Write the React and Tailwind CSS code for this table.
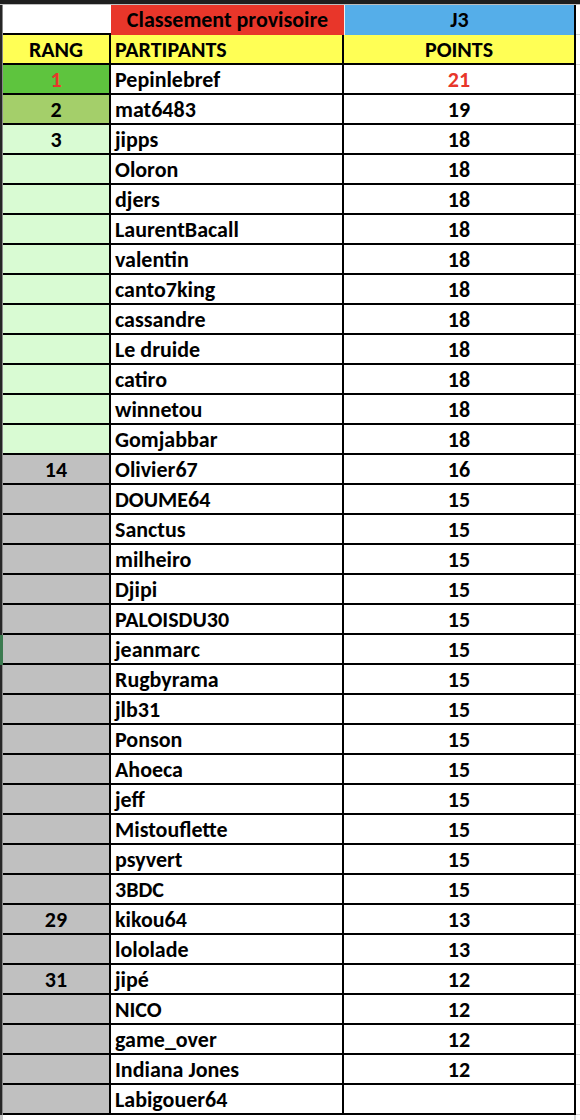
const rows = [
  ["1", "Pepinlebref", "21"],
  ["2", "mat6483", "19"],
  ["3", "jipps", "18"],
  ["", "Oloron", "18"],
  ["", "djers", "18"],
  ["", "LaurentBacall", "18"],
  ["", "valentin", "18"],
  ["", "canto7king", "18"],
  ["", "cassandre", "18"],
  ["", "Le druide", "18"],
  ["", "catiro", "18"],
  ["", "winnetou", "18"],
  ["", "Gomjabbar", "18"],
  ["14", "Olivier67", "16"],
  ["", "DOUME64", "15"],
  ["", "Sanctus", "15"],
  ["", "milheiro", "15"],
  ["", "Djipi", "15"],
  ["", "PALOISDU30", "15"],
  ["", "jeanmarc", "15"],
  ["", "Rugbyrama", "15"],
  ["", "jlb31", "15"],
  ["", "Ponson", "15"],
  ["", "Ahoeca", "15"],
  ["", "jeff", "15"],
  ["", "Mistouflette", "15"],
  ["", "psyvert", "15"],
  ["", "3BDC", "15"],
  ["29", "kikou64", "13"],
  ["", "lololade", "13"],
  ["31", "jipé", "12"],
  ["", "NICO", "12"],
  ["", "game_over", "12"],
  ["", "Indiana Jones", "12"],
  ["", "Labigouer64", ""],
];

function rankColor(i) {
  if (i === 0) return "bg-[#5ec43e]";
  if (i === 1) return "bg-[#a4cf6a]";
  if (i < 13) return "bg-[#d9fbd3]";
  return "bg-[#c0c0c0]";
}

function Strip({ selected }) {
  return (
    <div className={`flex w-[3px] shrink-0 ${selected ? "bg-[#3b7a4f]" : "bg-[#262626]"}`}>
      <div className="w-[2px]" />
      <div className={`w-px ${selected ? "bg-[#3b7a4f]" : "bg-[#8a8a8a]"}`} />
    </div>
  );
}

function Edge() {
  return <div className="w-[4px] shrink-0 border-b border-[#d4d4d4] bg-white" />;
}

export default function App() {
  return (
    <div
      className="flex h-[1120px] w-[580px] flex-col overflow-hidden bg-white font-bold text-black"
      style={{ fontFamily: "Carlito, Lato, 'Liberation Sans', sans-serif" }}
    >
      <div className="h-[4px] shrink-0 bg-[#1e1e1e]" />
      <div className="h-px shrink-0 bg-[#bdbdbd]" />

      <div className="flex h-[30px] shrink-0 text-[22px] leading-[30px]">
        <Strip />
        <div className="w-[108px] border-b-2 border-black bg-white" />
        <div className="flex w-[233px] justify-center bg-[#e8362a]">Classement provisoire</div>
        <div className="flex w-[230px] justify-center border-l border-[#f0f0f0] bg-[#55aee9]">J3</div>
        <div className="w-[2px] bg-black" />
        <Edge />
      </div>

      <div className="flex h-[30px] shrink-0 text-[22px] leading-[30px]">
        <Strip />
        <div className="flex w-[108px] justify-center border-r-2 border-b-2 border-black bg-[#ffff55]">RANG</div>
        <div className="w-[233px] border-r-2 border-b-2 border-black bg-[#ffff55] pl-[4px]">PARTIPANTS</div>
        <div className="flex w-[232px] justify-center border-r-2 border-b-2 border-black bg-[#ffff55]">POINTS</div>
        <Edge />
      </div>

      {rows.map(([rank, name, points], i) => (
        <div key={name} className="flex h-[30px] shrink-0 text-[22px] leading-[30px]">
          <Strip selected={i === 19} />
          <div
            className={`flex w-[108px] justify-center border-r-2 border-b-2 border-black ${rankColor(i)} ${
              i === 0 ? "text-[#e8362a]" : ""
            }`}
          >
            {rank}
          </div>
          <div className="w-[233px] whitespace-nowrap border-r-2 border-b-2 border-black bg-white pl-[4px]">{name}</div>
          <div
            className={`flex w-[232px] justify-center border-r-2 border-b-2 border-black bg-white ${
              i === 0 ? "text-[#e8362a]" : ""
            }`}
          >
            {points}
          </div>
          <Edge />
        </div>
      ))}

      <div className="flex flex-1">
        <div className="w-[3px] bg-[#c8c8c8]" />
        <div className="w-[571px]" />
        <div className="w-[2px] bg-[#d4d4d4]" />
      </div>
    </div>
  );
}
